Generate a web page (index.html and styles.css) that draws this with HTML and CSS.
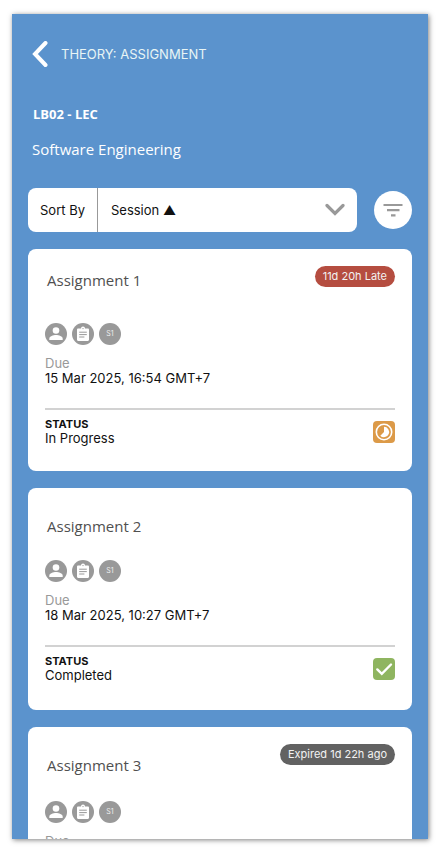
FILE: index.html
```html
<!DOCTYPE html>
<html lang="en">
<head>
<meta charset="utf-8">
<meta name="viewport" content="width=device-width, initial-scale=1">
<title>Theory: Assignment</title>
<link rel="stylesheet" href="styles.css">
</head>
<body>
<svg class="sprite" aria-hidden="true">
  <symbol id="person" viewBox="0 0 22 22">
    <circle cx="11" cy="11" r="11" fill="#999"/>
    <circle cx="11" cy="7.5" r="3.3" fill="#fff"/>
    <path d="M4.3 16.9v-1.2c0-2.4 3.9-3.7 6.7-3.7s6.7 1.3 6.7 3.7v1.2z" fill="#fff"/>
  </symbol>
  <symbol id="clipboard" viewBox="0 0 22 22">
    <circle cx="11" cy="11" r="11" fill="#999"/>
    <path d="M6.2 5.5H9a2 2 0 0 1 4 0h2.8c.7 0 1.2.5 1.2 1.2v10c0 .7-.5 1.2-1.2 1.2H6.2c-.7 0-1.2-.5-1.2-1.2v-10c0-.7.5-1.2 1.2-1.2z" fill="#fff"/>
    <circle cx="11" cy="5.6" r=".7" fill="#999"/>
    <path d="M7.2 9.2h7.6M7.2 11.6h7.6M7.2 14h5.2" stroke="#999" stroke-width="1"/>
  </symbol>
</svg>
<main class="screen">
  <header class="topbar">
    <button class="back" type="button" aria-label="Back">
      <svg width="16" height="26" viewBox="0 0 16 26"><path d="M13.5 2L3 13l10.500 11" fill="none" stroke="#fff" stroke-width="4" stroke-linecap="round"/></svg>
    </button>
    <h1 class="page-title">THEORY: ASSIGNMENT</h1>
  </header>
  <p class="class-code">LB02 - LEC</p>
  <p class="course">Software Engineering</p>

  <div class="tools">
    <div class="sort">
      <label class="sort-label" for="sort">Sort By</label>
      <select class="sort-select" id="sort"><option>Session ▲</option></select>
      <svg class="chevron" width="20" height="14" viewBox="0 0 20 14"><path d="M2 2.500l8 8 8-8" fill="none" stroke="#999" stroke-width="3.200" stroke-linecap="round"/></svg>
    </div>
    <button class="filter" type="button" aria-label="Filter">
      <svg width="20" height="14" viewBox="0 0 20 14"><path d="M.5 2h19M4 7.200h12.500M8 12.400h4.500" stroke="#999" stroke-width="2.200"/></svg>
    </button>
  </div>

  <article class="card">
    <header class="card-head">
      <h2 class="card-title card-title-raised">Assignment 1</h2>
      <span class="badge badge-late">11d 20h Late</span>
    </header>
    <div class="tags">
      <svg class="tag"><use href="#person"/></svg>
      <svg class="tag"><use href="#clipboard"/></svg>
      <span class="tag tag-text">S1</span>
    </div>
    <p class="due">Due</p>
    <p class="date">15 Mar 2025, 16:54 GMT+7</p>
    <footer class="status">
      <div><h3 class="status-label">STATUS</h3><p class="status-text">In Progress</p></div>
      <svg class="status-icon" viewBox="0 0 22 22">
        <rect width="22" height="22" rx="4" fill="#dc9a48"/>
        <circle cx="11" cy="11" r="7.700" fill="none" stroke="#fff" stroke-width="1.600"/>
        <path d="M11 5.800a5.200 5.200 0 1 1-3.700 8.900L11 11z" fill="#fff"/>
      </svg>
    </footer>
  </article>

  <article class="card">
    <header class="card-head card-head-plain">
      <h2 class="card-title">Assignment 2</h2>
    </header>
    <div class="tags">
      <svg class="tag"><use href="#person"/></svg>
      <svg class="tag"><use href="#clipboard"/></svg>
      <span class="tag tag-text">S1</span>
    </div>
    <p class="due">Due</p>
    <p class="date">18 Mar 2025, 10:27 GMT+7</p>
    <footer class="status">
      <div><h3 class="status-label">STATUS</h3><p class="status-text">Completed</p></div>
      <svg class="status-icon" viewBox="0 0 22 22">
        <rect width="22" height="22" rx="4" fill="#8fb560"/>
        <path d="M4.300 11.400l4.500 4.500L18 6.500" fill="none" stroke="#fff" stroke-width="2.400" stroke-linecap="round"/>
      </svg>
    </footer>
  </article>

  <article class="card">
    <header class="card-head">
      <h2 class="card-title">Assignment 3</h2>
      <span class="badge badge-expired">Expired 1d 22h ago</span>
    </header>
    <div class="tags">
      <svg class="tag"><use href="#person"/></svg>
      <svg class="tag"><use href="#clipboard"/></svg>
      <span class="tag tag-text">S1</span>
    </div>
    <p class="due">Due</p>
  </article>
</main>
</body>
</html>
```
FILE: styles.css
```css
* { box-sizing: border-box; }
body {
  margin: 0;
  padding: 14px 16px 15px 12px;
  height: 100vh;
  overflow: hidden;
  background: #fff;
  font-family: Inter, "Liberation Sans", sans-serif;
  font-size: 13px;
  color: #111;
}
h1, h2, h3, p { margin: 0; font-weight: 400; }
svg { display: block; flex: none; }
button { border: 0; padding: 0; cursor: pointer; }
.sprite { position: absolute; width: 0; height: 0; }

.screen {
  height: 100%;
  overflow: hidden;
  padding: 0 16px;
  background: #5b93cd;
  box-shadow: 1px 1px 5px rgba(0, 0, 0, .5);
}
.topbar {
  display: flex;
  align-items: center;
  gap: 13px;
  height: 80px;
  padding-left: 4px;
}
.back { background: none; }
.page-title { font-size: 13px; color: #e8f5f5; }
.class-code, .course {
  padding-left: 4px;
  color: #fff;
  font-family: "Open Sans", sans-serif;
  line-height: 20px;
}
.class-code { padding-left: 5px; padding-top: 10px; font-weight: 700; }
.course { margin-top: 15px; font-size: 15px; font-weight: 500; }

.tools {
  display: flex;
  align-items: center;
  gap: 17px;
  margin: 29px 0 17px;
}
.sort {
  position: relative;
  display: flex;
  flex: 1;
  height: 44px;
  background: #fff;
  border-radius: 8px;
}
.sort-label {
  display: flex;
  align-items: center;
  padding: 0 12px;
  border-right: 1px solid #999;
}
.sort-select {
  flex: 1;
  min-width: 0;
  padding: 0 13px;
  border: 0;
  background: none;
  appearance: none;
  font: inherit;
  color: inherit;
}
.chevron { position: absolute; right: 12px; top: 15px; pointer-events: none; }
.filter {
  display: grid;
  place-items: center;
  width: 38px;
  height: 38px;
  background: #fff;
  border-radius: 50%;
}

.card {
  min-height: 222px;
  margin-bottom: 17px;
  padding: 0 17px;
  background: #fff;
  border-radius: 8px;
}
.card-head {
  display: flex;
  justify-content: space-between;
  align-items: flex-start;
  height: 74px;
}
.card-head-plain { height: 72px; }
.card-title {
  padding: 28px 0 0 2px;
  font-family: "Open Sans", sans-serif;
  font-size: 15px;
  line-height: 20px;
  color: #505050;
}
.card-title-raised { padding-top: 21px; }
.badge {
  margin-top: 17px;
  padding: 0 8px;
  border-radius: 11px;
  font-size: 11px;
  line-height: 21px;
  color: #f2f2f2;
}
.badge-late { background: #b54d40; }
.badge-expired { background: #626262; }
.tags { display: flex; gap: 5px; }
.tag { width: 22px; height: 22px; }
.tag-text {
  border-radius: 50%;
  background: #999;
  color: #eee;
  font-size: 7px;
  line-height: 22px;
  text-align: center;
}
.due { margin-top: 11px; line-height: 15px; color: #999; }
.date { line-height: 15px; }
.status {
  display: flex;
  justify-content: space-between;
  align-items: center;
  margin-top: 22px;
  padding-top: 7px;
  border-top: 2px solid #d2d2d2;
}
.status-label { font-size: 11px; font-weight: 700; line-height: 14px; }
.status-text { line-height: 15px; }
.status-icon { width: 22px; height: 22px; }
```
